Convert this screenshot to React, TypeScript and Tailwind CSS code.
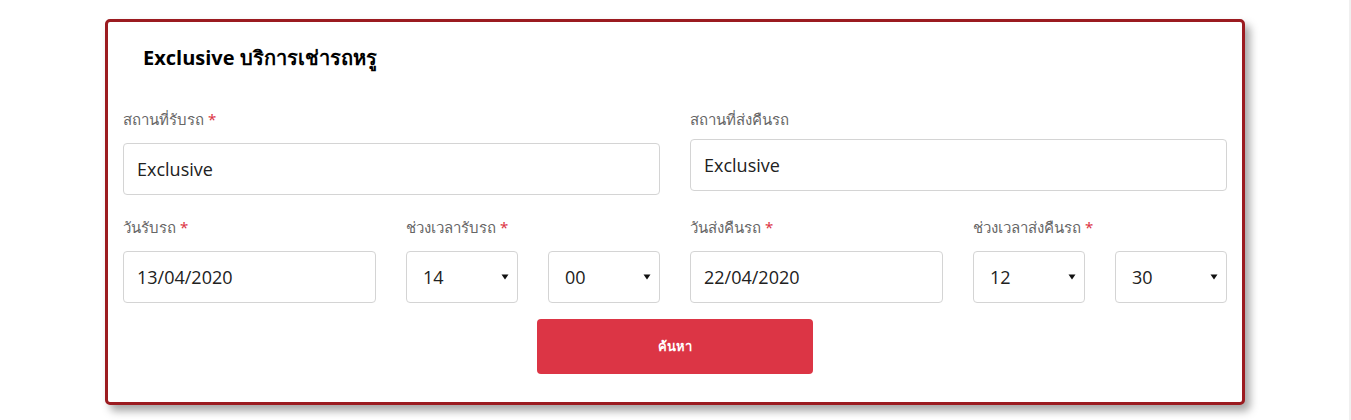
import React from "react";

const latin = { fontFamily: '"Open Sans", "Noto Sans", sans-serif' };

function Label({ text, req }: { text: string; req?: boolean }) {
  return (
    <div className="h-[24px] flex items-center text-[15px] text-[#666666]" style={{ fontFamily: '"Noto Sans", sans-serif' }}>
      <span>{text}</span>
      {req && <span className="ml-1 text-[#dc3545]">*</span>}
    </div>
  );
}

function Field({ value, w }: { value: string; w: string }) {
  return (
    <div
      className={`${w} h-[52px] border border-[#d4d4d4] rounded-[4px] bg-white flex items-center pl-[13px] text-[18px] text-[#212121]`}
      style={latin}
    >
      {value}
    </div>
  );
}

function Sel({ value }: { value: string }) {
  return (
    <div
      className="w-[112px] h-[52px] border border-[#d4d4d4] rounded-[4px] bg-white flex items-center justify-between pl-[16px] pr-[8px] text-[18px] text-[#212121]"
      style={latin}
    >
      <span>{value}</span>
      <svg width="8" height="6" viewBox="0 0 8 6"><path d="M0.5 0.5 L7.5 0.5 L4 5.5 Z" fill="#111" /></svg>
    </div>
  );
}

export default function App() {
  return (
    <div className="w-[1351px] h-[420px] bg-white flex">
      <div className="flex-1">
        <div className="ml-[105px] mt-[19px] w-[1140px] border-[3px] border-[#9b1b20] rounded-[5px] bg-white shadow-[5px_6px_8px_rgba(0,0,0,0.35)] px-[15px] pt-[21px] pb-[28px]">
          <div className="pl-[20px] text-[20px] font-bold text-black leading-[30px]" style={{ fontFamily: '"Open Sans", "Noto Sans", sans-serif' }}>
            Exclusive บริการเช่ารถหรู
          </div>
          <div className="mt-[34px] flex gap-[30px]">
            <div className="w-[537px]">
              <Label text="สถานที่รับรถ" req />
              <div className="mt-[12px]">
                <Field value="Exclusive" w="w-[537px]" />
              </div>
            </div>
            <div className="w-[537px]">
              <Label text="สถานที่ส่งคืนรถ" />
              <div className="mt-[8px]">
                <Field value="Exclusive" w="w-[537px]" />
              </div>
            </div>
          </div>
          <div className="mt-[20px] flex gap-[30px]">
            <div className="w-[253px]">
              <Label text="วันรับรถ" req />
              <div className="mt-[12px]"><Field value="13/04/2020" w="w-[253px]" /></div>
            </div>
            <div className="w-[254px]">
              <Label text="ช่วงเวลารับรถ" req />
              <div className="mt-[12px] flex gap-[30px]">
                <Sel value="14" />
                <Sel value="00" />
              </div>
            </div>
            <div className="w-[253px]">
              <Label text="วันส่งคืนรถ" req />
              <div className="mt-[12px]"><Field value="22/04/2020" w="w-[253px]" /></div>
            </div>
            <div className="w-[254px]">
              <Label text="ช่วงเวลาส่งคืนรถ" req />
              <div className="mt-[12px] flex gap-[30px]">
                <Sel value="12" />
                <Sel value="30" />
              </div>
            </div>
          </div>
          <div className="mt-[16px] flex justify-center">
            <div
              className="w-[276px] h-[55px] bg-[#dc3545] rounded-[4px] flex items-center justify-center text-white text-[13px] font-bold"
              style={{ fontFamily: '"Noto Sans", sans-serif' }}
            >
              ค้นหา
            </div>
          </div>
        </div>
      </div>
      <div className="w-[2px] bg-[#f0f0f0]" />
    </div>
  );
}
